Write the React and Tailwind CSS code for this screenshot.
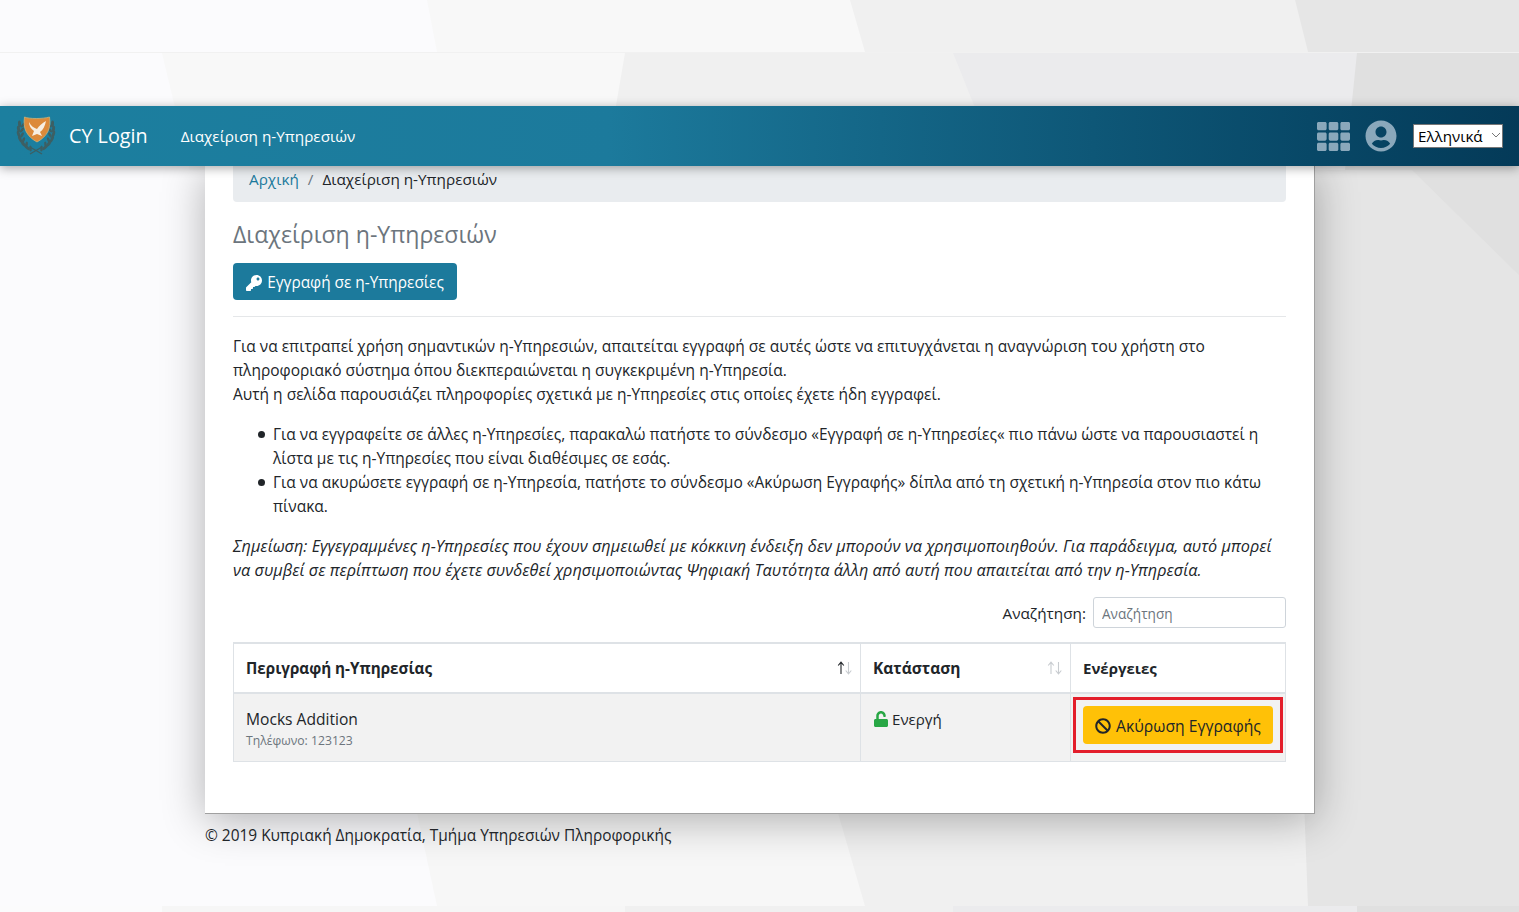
import React from "react";
import { FaKey, FaBan, FaUnlock, FaTh, FaUserCircle } from "react-icons/fa";

const Background = () => (
  <svg
    className="absolute top-0 left-0 -z-10"
    width="1519"
    height="912"
    viewBox="0 0 1519 912"
    aria-hidden="true"
  >
    <rect width="1519" height="912" fill="#fbfbfd" />
    {/* top strip */}
    <polygon points="427,0 1519,0 1519,52 437,52" fill="#f8f8f8" />
    <polygon points="850,0 1519,0 1519,52 865,52" fill="#f0f0f0" />
    <polygon points="1295,0 1519,0 1519,52 1308,52" fill="#e6e6e6" />
    <rect y="52" width="1519" height="1" fill="#f1f1f1" />
    {/* second strip */}
    <polygon points="162,53 1519,53 1519,170 190,170" fill="#f8f8f8" />
    <polygon points="625,53 1519,53 1519,170 605,170" fill="#f0f0f0" />
    <polygon points="953,53 1519,53 1519,170 1000,170" fill="#ebebed" />
    <polygon points="1357,53 1519,53 1519,170 1345,170" fill="#e0e0e0" />
    {/* lower area */}
    <polygon points="417,813 1519,813 1519,906 437,906" fill="#f7f7f7" />
    <polygon points="838,813 1519,813 1519,906 865,906" fill="#f0f0f0" />
    <polygon points="1280,170 1519,170 1519,906 1308,906" fill="#e5e5e5" />
    <polygon points="1408,166 1519,166 1519,275" fill="#e0e0e0" />
    {/* next tile starts */}
    <rect y="906" width="1519" height="6" fill="#fbfbfc" />
    <rect x="162" y="906" width="1357" height="6" fill="#f6f6f6" />
    <rect x="625" y="906" width="894" height="6" fill="#f0f0f0" />
    <rect x="953" y="906" width="566" height="6" fill="#ebebed" />
    <rect x="1357" y="906" width="162" height="6" fill="#e0e0e0" />
  </svg>
);

const Logo = () => {
  const leaves = [
    [5, 8, -4], [4, 13, -8], [4, 18, -14], [5.5, 23, -24], [8.5, 27.5, -36], [12.5, 31.5, -48],
  ];
  return (
    <svg width="40" height="40" viewBox="0 0 40 40" className="shrink-0">
      {leaves.map(([x, y, r], i) => (
        <g key={i} fill="#3d5f63">
          <ellipse cx={x - 1.5} cy={y} rx="1.5" ry="3.4" transform={`rotate(${r} ${x - 1.5} ${y})`} />
          <ellipse cx={x + 2} cy={y + 1} rx="1.3" ry="3" transform={`rotate(${r + 45} ${x + 2} ${y + 1})`} />
          <ellipse cx={40 - x + 1.5} cy={y} rx="1.5" ry="3.4" transform={`rotate(${-r} ${40 - x + 1.5} ${y})`} />
          <ellipse cx={40 - x - 2} cy={y + 1} rx="1.3" ry="3" transform={`rotate(${-r - 45} ${40 - x - 2} ${y + 1})`} />
        </g>
      ))}
      <path d="M14 38 L26 31 M26 38 L14 31" stroke="#3d5f63" strokeWidth="1.4" />
      <path
        d="M8.5 1 C13 3 27 3 33.5 1 C35 12 32 20 21 26 C10 20 7 12 8.5 1 Z"
        fill="#dc8a3a"
        stroke="#c9b27a"
        strokeWidth="0.8"
      />
      <path
        d="M13 6 C15 10 18 12 21 13 C23 10 26 7 30 5 C29 10 27 14 24 16 L26 20 L21 18 L16 20 L18 15 C15 13 13 10 13 6 Z"
        fill="#f7efe2"
      />
    </svg>
  );
};

// datatables style sort arrows
const SortArrows = ({ upDark }) => (
  <svg
    className="absolute right-[8px] top-[17px]"
    width="15"
    height="14"
    viewBox="0 0 15 14"
    fill="none"
    strokeWidth="1.1"
  >
    <path d="M4 13 V1.5 M1.2 4.5 L4 1.2 L6.8 4.5" stroke={upDark ? "#212529" : "#c8ccd0"} />
    <path d="M11.5 1 V12.5 M8.7 9.5 L11.5 12.8 L14.3 9.5" stroke="#c8ccd0" />
  </svg>
);

export default function App() {
  return (
    <div className="relative min-h-[912px] overflow-hidden font-['Open_Sans',sans-serif] text-[15.5px] leading-[24px] text-[#212529]">
      <Background />

      <div className="h-[106px]" />

      <nav className="relative z-10 flex h-[60px] items-center bg-linear-to-r from-[#1c7f9f] via-[#1c7a9c] via-40% to-[#043a58] pl-[16px] pr-[16px] shadow-[0_2px_10px_rgba(0,0,0,0.35)]">
        <Logo />
        <span className="ml-[13px] text-[19.75px] text-white">CY Login</span>
        <span className="ml-[33px] text-[15.3px] text-white">Διαχείριση η-Υπηρεσιών</span>
        <div className="ml-auto flex items-center">
          <FaTh className="h-[33px] w-[33px] text-[#8aa8bb]" />
          <FaUserCircle className="ml-[15px] h-[32px] w-[32px] text-[#8aa8bb]" />
          <div className="relative ml-[16px] h-[24px] w-[90px] bg-white">
            <select className="h-full w-full appearance-none border border-[#767676] bg-white pl-[4px] text-[15.2px] leading-[20px] text-black outline-none">
              <option>Ελληνικά</option>
            </select>
            <svg
              className="pointer-events-none absolute right-[2px] top-[8px]"
              width="10"
              height="7"
              viewBox="0 0 10 7"
              fill="none"
              stroke="#777"
            >
              <path d="M1 1 L5 5 L9 1" />
            </svg>
          </div>
        </div>
      </nav>

      <div className="ml-[205px] w-[1110px] border-r border-b border-[#a0a0a0] bg-white px-[28px] pb-[51px] shadow-[0_6px_40px_rgba(0,0,0,0.3)]">
        <div className="flex h-[36px] items-start rounded-b-[4px] bg-[#e9ecef] px-[16px] pt-[1px] text-[15.3px]">
          <a className="text-[#1c7a9c]">Αρχική</a>
          <span className="px-[9px] text-[#6c757d]">/</span>
          <span>Διαχείριση η-Υπηρεσιών</span>
        </div>

        <h2 className="mt-[16px] text-[23.1px] leading-[32px] text-[#6c757d]">Διαχείριση η-Υπηρεσιών</h2>

        <button className="mt-[13px] flex h-[37px] w-[224px] items-center justify-center rounded-[4px] bg-[#1c7a9c] pt-[2px] text-[15.4px] text-white">
          <FaKey className="mr-[5px] h-[16px] w-[16px]" />
          Εγγραφή σε η-Υπηρεσίες
        </button>

        <hr className="mt-[16px] border-[#e5e7e9]" />

        <p className="mt-[17px]">
          Για να επιτραπεί χρήση σημαντικών η-Υπηρεσιών, απαιτείται εγγραφή σε αυτές ώστε να επιτυγχάνεται η αναγνώριση του χρήστη στο πληροφοριακό σύστημα όπου διεκπεραιώνεται η συγκεκριμένη η-Υπηρεσία.
          <br />
          Αυτή η σελίδα παρουσιάζει πληροφορίες σχετικά με η-Υπηρεσίες στις οποίες έχετε ήδη εγγραφεί.
        </p>

        <ul className="mt-[16px] pl-[40px]">
          <li className="relative">
            <span className="absolute -left-[15px] top-[9px] h-[7px] w-[7px] rounded-full bg-[#212529]" />
            Για να εγγραφείτε σε άλλες η-Υπηρεσίες, παρακαλώ πατήστε το σύνδεσμο «Εγγραφή σε η-Υπηρεσίες« πιο πάνω ώστε να παρουσιαστεί η λίστα με τις η-Υπηρεσίες που είναι διαθέσιμες σε εσάς.
          </li>
          <li className="relative">
            <span className="absolute -left-[15px] top-[9px] h-[7px] w-[7px] rounded-full bg-[#212529]" />
            Για να ακυρώσετε εγγραφή σε η-Υπηρεσία, πατήστε το σύνδεσμο «Ακύρωση Εγγραφής» δίπλα από τη σχετική η-Υπηρεσία στον πιο κάτω πίνακα.
          </li>
        </ul>

        <p className="mt-[16px] pr-[4px] text-[16.25px] italic">
          Σημείωση: Εγγεγραμμένες η-Υπηρεσίες που έχουν σημειωθεί με κόκκινη ένδειξη δεν μπορούν να χρησιμοποιηθούν. Για παράδειγμα, αυτό μπορεί να συμβεί σε περίπτωση που έχετε συνδεθεί χρησιμοποιώντας Ψηφιακή Ταυτότητα άλλη από αυτή που απαιτείται από την η-Υπηρεσία.
        </p>

        <div className="mt-[15px] flex items-center justify-end">
          <label className="pt-[1px] text-[15.3px]">Αναζήτηση:</label>
          <input
            placeholder="Αναζήτηση"
            className="ml-[7px] h-[31px] w-[193px] rounded-[3px] border border-[#ced4da] bg-white px-[8px] pt-[2px] text-[13.6px] outline-none placeholder:text-[#6c757d]"
          />
        </div>

        <table className="mt-[14px] w-[1053px] table-fixed border-collapse">
          <thead>
            <tr className="h-[50px] text-left text-[15.2px]">
              <th className="relative w-[627px] border border-t-2 border-b-2 border-[#dee2e6] px-[12px] font-bold">
                Περιγραφή η-Υπηρεσίας
                <SortArrows upDark />
              </th>
              <th className="relative w-[210px] border border-t-2 border-b-2 border-[#dee2e6] px-[12px] text-[15.5px] font-bold">
                Κατάσταση
                <SortArrows />
              </th>
              <th className="border border-t-2 border-b-2 border-[#dee2e6] px-[12px] text-[15px] font-bold">Ενέργειες</th>
            </tr>
          </thead>
          <tbody>
            <tr className="h-[68px] bg-[#f2f2f2] align-top">
              <td className="border border-[#dee2e6] px-[12px] pt-[13px] text-[15.6px]">
                Mocks Addition
                <div className="text-[12.2px] leading-[19px] text-[#6c757d]">Τηλέφωνο: 123123</div>
              </td>
              <td className="border border-[#dee2e6] px-[12px] pt-[13px]">
                <span className="flex items-center">
                  <FaUnlock className="mr-[3px] h-[16px] w-[16px] text-[#28a745]" />
                  <span className="text-[15.1px]">Ενεργή</span>
                </span>
              </td>
              <td className="border border-[#dee2e6] px-[12px] pt-[12px]">
                <button className="relative flex h-[38px] w-[190px] items-center justify-center rounded-[4px] bg-[#ffc107] pt-[1px] text-[15.7px] text-[#212529]">
                  <FaBan className="mr-[5px] h-[16px] w-[16px]" />
                  Ακύρωση Εγγραφής
                  <span className="absolute -top-[9px] -bottom-[9px] -left-[10px] -right-[10px] border-[3px] border-[#e31e2b]" />
                </button>
              </td>
            </tr>
          </tbody>
        </table>
      </div>

      <footer className="ml-[205px] mt-[9px] text-[15.45px]">© 2019 Κυπριακή Δημοκρατία, Τμήμα Υπηρεσιών Πληροφορικής</footer>
    </div>
  );
}
